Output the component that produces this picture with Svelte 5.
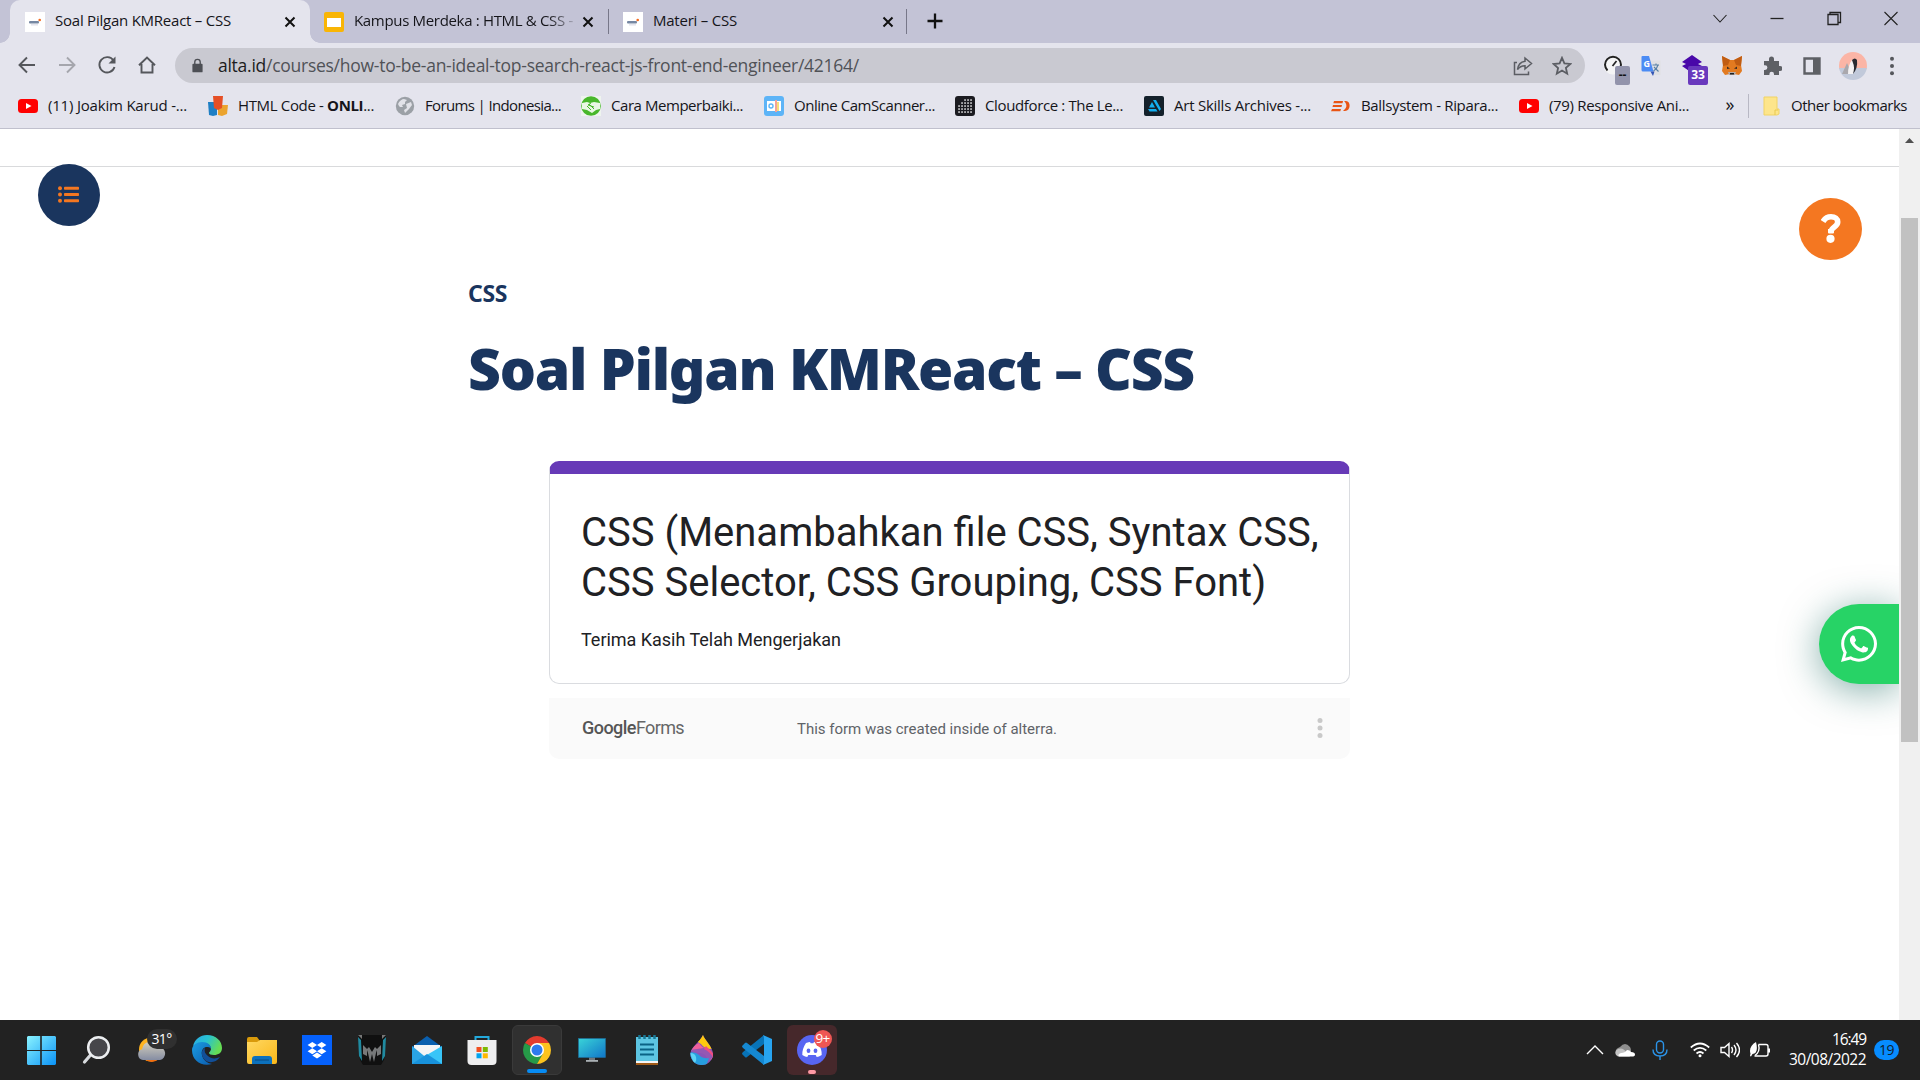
<script>
  const bookmarks = [
    { icon: 'youtube', label: '(11) Joakim Karud -...', text: 139, slot: 190 },
    { icon: 'html', label: 'HTML Code - ', bold: 'ONLI', tail: '...', text: 136, slot: 187 },
    { icon: 'globe', label: 'Forums | Indonesia...', text: 136, slot: 186 },
    { icon: 'hands', label: 'Cara Memperbaiki...', text: 132, slot: 183 },
    { icon: 'camera', label: 'Online CamScanner...', text: 141, slot: 191 },
    { icon: 'dots', label: 'Cloudforce : The Le...', text: 138, slot: 189 },
    { icon: 'art', label: 'Art Skills Archives -...', text: 137, slot: 187 },
    { icon: 'ball', label: 'Ballsystem - Ripara...', text: 137, slot: 188 },
    { icon: 'youtube', label: '(79) Responsive Ani...', text: 140, slot: 196 }
  ];

  const apps = [
    'start', 'search', 'weather', 'edge', 'folder', 'dropbox', 'predator', 'mail',
    'store', 'chrome', 'monitor', 'notepad', 'paint', 'vscode', 'discord'
  ];

  // Tracks a label in or out so that it spans the given width.
  function fit(node, width) {
    const range = document.createRange();
    range.selectNodeContents(node);
    const natural = range.getBoundingClientRect().width;
    node.style.letterSpacing = `${(width - natural) / node.textContent.length}px`;
  }
</script>

{#snippet favicon()}
  <svg class="i20" viewBox="0 0 20 20"><rect width="20" height="20" fill="#fff" /><rect x="4" y="9" width="10" height="2.400" rx="1" fill="#7687a2" /><rect x="6" y="12.500" width="7" height=".8" fill="#ccd" /><circle cx="14.700" cy="8" r="1.300" fill="#f36b21" /></svg>
{/snippet}

{#snippet closeX()}
  <svg class="i20" viewBox="0 0 20 20"><path d="M5.500 5.500l9 9M14.500 5.500l-9 9" stroke="#111" stroke-width="2" /></svg>
{/snippet}

{#snippet bookmarkIcon(name)}
  <svg class="i20" viewBox="0 0 20 20">
    {#if name === 'youtube'}
      <rect y="3" width="20" height="14" rx="3.500" fill="#f00" /><path d="M8 7l5.500 3L8 13z" fill="#fff" />
    {:else if name === 'html'}
      <path d="M0 6h9v13l-4 1-4-1z" fill="#1f7fc4" /><path d="M10 9h10l-1 9-5 2-4-1z" fill="#eba32e" /><path d="M5 0h10l-1 12-4 2-4-2z" fill="#e54f26" />
    {:else if name === 'globe'}
      <circle cx="10" cy="10" r="9.200" fill="#9ba0a6" /><path d="M3 8c1-3 4-5 6-5l3 1-2 2v2l-3 1 1 2H5l-1-1zM11 8l5-2 1 3-3 4-4 4-1-3 3-2z" fill="#e1e2e8" />
    {:else if name === 'hands'}
      <rect width="20" height="20" fill="#eef4ee" /><circle cx="10" cy="10" r="9.800" fill="#48b72b" /><path d="M1 7l5-1 3 1 4-1 6 1v6l-4 1-4 3-5-3-5-1z" fill="#e9f7e4" /><path d="M6 10l4 4M8 8l5 5M10 7l-3 2 6 2" stroke="#48b72b" fill="none" />
    {:else if name === 'camera'}
      <rect width="20" height="20" rx="3" fill="#5db4f7" /><path d="M3 5h14v10H3z" fill="#fff" /><circle cx="7" cy="10" r="2.700" fill="#5db4f7" /><circle cx="7" cy="10" r="1.300" fill="#fff" /><path d="M11 4h2v12h-2z" fill="#f4a29a" /><path d="M13 6h2v9h-2z" fill="#f7df78" />
    {:else if name === 'dots'}
      <rect width="20" height="20" rx="3" fill="#1b1b20" />
      {#each [4, 7, 10, 13, 16] as y, r}{#each [4, 7, 10, 13, 16] as x, c}{#if r + c > 1}<rect x={x - 0.7} y={y - 0.7} width="1.500" height="1.500" fill="#f4f4f4" />{/if}{/each}{/each}
    {:else if name === 'art'}
      <rect width="20" height="20" rx="2" fill="#14212b" /><path d="M4 13h8l1.500 2.500H5.500zM9 4h3l5 9-1.500 2zM8 6l3 5.500H5z" fill="#13aff0" />
    {:else if name === 'ball'}
      <path d="M3 5h9l-.5 2.200H2.300zM2 9h9l-.5 2H1.500zM1 13h9l-.7 2.200H0zM13 5h2c5 0 5 10-1 10h-2l2-2c2-2 2-5-1-8z" fill="#e95414" />
    {/if}
  </svg>
{/snippet}

{#snippet appIcon(name)}
  <svg class="i30" viewBox="0 0 30 30">
    {#if name === 'start'}
      <linearGradient id="win" x1="0" y1="0" x2="1" y2="1"><stop stop-color="#8af3ff" /><stop offset="1" stop-color="#0a92f6" /></linearGradient>
      <path d="M1 1h12.500v14H0V2zM14.500 1h13.500l1 1v13H14.500zM0 16h13.500v14H1l-1-1zM14.500 16H29v13l-1 1H14.500z" fill="url(#win)" /><path d="M14 0v30M0 15.500h30" stroke="#222" stroke-width="1.200" />
    {:else if name === 'search'}
      <path d="M9 19.500L2.500 27" stroke="#d8dbde" stroke-width="3.200" stroke-linecap="round" /><circle cx="16.500" cy="12.500" r="10.300" fill="#46464a" stroke="#eceef0" stroke-width="2.500" />
    {:else if name === 'weather'}
      <linearGradient id="cl" x1="0" y1="0" x2="0" y2="1"><stop stop-color="#d5d0bd" /><stop offset="1" stop-color="#858da3" /></linearGradient>
      <circle cx="14" cy="14.500" r="12" fill="#ffb31f" /><path d="M7 24q8 6 15 0z" fill="#f36f10" /><path d="M6 25a5.500 5.500 0 0 1-1-10.700 9 9 0 0 1 17-2.500A6.700 6.700 0 0 1 23 25z" fill="url(#cl)" />
    {:else if name === 'edge'}
      <linearGradient id="e1" x1="0" y1="0" x2="1" y2=".4"><stop stop-color="#2aa8e6" /><stop offset=".5" stop-color="#28c2d1" /><stop offset="1" stop-color="#65dd55" /></linearGradient>
      <linearGradient id="e2" x1="0" y1="0" x2="1" y2="1"><stop stop-color="#1b9de2" /><stop offset="1" stop-color="#0b5cb0" /></linearGradient>
      <path d="M1 11C3 4 8 0 15 0c9 0 15 6 15 13 0 5-4 7-8 7-3 0-5-1-5-2s2-2 2-4c0-3-3-6-8-6-5 0-8 2-10 3z" fill="url(#e1)" /><path d="M0 15C0 10 5 7 10 7c6 0 9 3 9 7-1-2-3-2-4-2-4 0-6 4-5 8 1 5 5 8 10 9C10 32 0 26 0 15z" fill="url(#e2)" /><path d="M13 13c-4 2-4 7-1 11 4 5 12 4 16-2-4 2-9 2-12-1-3-2-4-5-3-8z" fill="#124f98" />
    {:else if name === 'folder'}
      <linearGradient id="fo" x1="0" y1="0" x2="1" y2="1"><stop stop-color="#ffd862" /><stop offset="1" stop-color="#f9b719" /></linearGradient>
      <path d="M0 4q0-2 2-2h8l3 4h15v5H0z" fill="#d99a0b" /><path d="M0 7h10l3-2h17v22q0 2-2 2H2q-2 0-2-2z" fill="url(#fo)" /><path d="M5 29v-5q0-3 3-3h14q3 0 3 3v5z" fill="#0c71bd" /><path d="M8 25h14" stroke="#084b81" />
    {:else if name === 'dropbox'}
      <rect width="30" height="30" fill="#0561fc" /><path d="M10.300 7l4.700 3-4.700 3-4.700-3zM19.700 7l4.700 3-4.700 3-4.700-3zM10.300 13.200l4.700 3-4.700 3-4.700-3zM19.700 13.200l4.700 3-4.700 3-4.700-3zM15 17.400l4.700 3-4.700 3-4.700-3z" fill="#fff" />
    {:else if name === 'predator'}
      <path d="M1 0h28l-2 25-3 5H6l-3-5z" fill="#101010" /><path d="M1 2l3 3 1 21-3-5zM29 2l-3 3-1 21 3-5z" fill="#208aa0" /><path d="M6 10l4 4 2-2 3 5 3-5 2 2 4-4v9l-4 2v-6l-1 3-2 9-2-8-2 8-2-9-1-3v6l-4-2z" fill="#77797a" /><path d="M1 0h4v4zM29 0h-4v4z" fill="#777" />
    {:else if name === 'mail'}
      <path d="M0 12L15 1l15 11v17H0z" fill="#0a5fae" /><path d="M2 10h26v12H2z" fill="#f4f4f5" /><path d="M0 11l22 18H0z" fill="#2aa4e5" /><path d="M30 11L8 24l14 5h8z" fill="#38c5f8" /><path d="M0 29h30L15 19z" fill="#1892dc" />
    {:else if name === 'store'}
      <path d="M8.500 7V2h13v5" fill="none" stroke="#23a9dc" stroke-width="2" /><path d="M.5 5h29v21q0 4-4 4h-21q-4 0-4-4z" fill="#eeeeef" /><path d="M9.500 12h5v5h-5z" fill="#f14f21" /><path d="M15.800 12h5v5h-5z" fill="#7eb900" /><path d="M9.500 18.300h5v5h-5z" fill="#00a3ee" /><path d="M15.800 18.300h5v5h-5z" fill="#feb800" />
    {:else if name === 'chrome'}
      <path d="M15 15L2.900 8A14 14 0 0 1 27.100 8z" fill="#e33b2e" /><path d="M15 15L2.900 8A14 14 0 0 0 15 29l6-10z" fill="#269a48" /><path d="M15 8h12.100A14 14 0 0 1 15 29l6-10.500z" fill="#fcc31e" /><circle cx="15" cy="15" r="7" fill="#fff" /><circle cx="15" cy="15" r="5.500" fill="#2d7aed" />
    {:else if name === 'monitor'}
      <linearGradient id="mo" x1="0" y1="0" x2="1" y2="1"><stop stop-color="#39d4d8" /><stop offset="1" stop-color="#1175c8" /></linearGradient>
      <path d="M12 21h6v4h-6z" fill="#71777c" /><path d="M9 25h12v1.800H9z" fill="#aab0b4" /><rect x="1.500" y="3.500" width="27" height="19" fill="url(#mo)" stroke="#1b6e9e" stroke-width=".6" />
    {:else if name === 'notepad'}
      <path d="M4 26h22v4H4z" fill="#a05a17" /><path d="M4 25h22v3H4z" fill="#f5f5f5" /><path d="M4 2h22v24H4z" fill="#5dc5e2" /><path d="M8 9.500h14M8 14.500h14M8 19.500h14" stroke="#0a6285" stroke-width="1.800" /><path d="M7.500 0v4M12.500 0v4M17.500 0v4M22.500 0v4" stroke="#187895" stroke-width="2.500" />
    {:else if name === 'paint'}
      <clipPath id="drop"><path d="M16 0c1 4 10 12 10 19a11.300 11 0 0 1-22.600 0C3.400 12 13 7 16 0z" /></clipPath>
      <g clip-path="url(#drop)"><path d="M0 0h30v30H0z" fill="#8a55b7" /><path d="M0 0h30v12q-10 5-16-3z" fill="#ffc90e" /><path d="M4 16q3-6 8-8 3 5 8 6t8 10l-6 1q0-7-8-8-6-1-10-1z" fill="#f0609a" /><path d="M3 15q3 3 9 3 8 0 9 9l5-5q-1-8-9-9z" fill="#9458b3" /><path d="M19 11l8 8v6q-3-8-10-11z" fill="#ef4d83" /><path d="M0 18q8-2 12 2t10 3l-3 8H0z" fill="#269edf" /><path d="M3 18q5 0 6 4t-2 7z" fill="#5ed4f4" /></g>
    {:else if name === 'vscode'}
      <path d="M22 0v9L5 22q-1 1-2 0l-3-3q0-1 1-2z" fill="#0873b7" /><path d="M22 30v-9L5 8q-1-1-2 0L0 11q0 1 1 2z" fill="#1588d1" /><path d="M21 0l9 4v22l-9 4q1-1 1-3V3q0-2-1-3z" fill="#27a4f0" />
    {:else if name === 'discord'}
      <circle cx="15" cy="15" r="15" fill="#5865f2" /><path d="M9 8q3-1 4-1l.7 1.200h2.600L17 7q2 0 4 1 4 6 3.700 12-3 2-5 2l-1-2h-7.400l-1 2q-2 0-5-2Q5 14 9 8z" fill="#fff" /><ellipse cx="11.500" cy="15.800" rx="1.900" ry="2.200" fill="#5865f2" /><ellipse cx="18.500" cy="15.800" rx="1.900" ry="2.200" fill="#5865f2" />
    {/if}
  </svg>
{/snippet}

<div class="screen">
  <header class="tabs">
    <div class="tab active">
      {@render favicon()}
      <span class="label" use:fit={176}>Soal Pilgan KMReact – CSS</span>
      {@render closeX()}
    </div>
    <div class="tab second">
      <svg class="i20" viewBox="0 0 20 20"><rect width="20" height="20" rx="2" fill="#f9b505" /><path d="M3 6h14v9H3z" fill="#fff" /></svg>
      <span class="label fade" use:fit={219}>Kampus Merdeka : HTML &amp; CSS -</span>
      {@render closeX()}
    </div>
    <div class="tab third">
      {@render favicon()}
      <span class="label" use:fit={84}>Materi – CSS</span>
      {@render closeX()}
    </div>
    <svg class="plus" viewBox="0 0 20 20"><path d="M10 2.500v15M2.500 10h15" stroke="#111" stroke-width="2.300" /></svg>
    <div class="window">
      <svg viewBox="0 0 20 20"><path d="M3.500 7l6.500 7 6.500-7" /></svg>
      <svg viewBox="0 0 20 20"><path d="M3.500 10.500h13" stroke-width="1.300" /></svg>
      <svg viewBox="0 0 20 20"><path d="M4 6.500h10v10H4zM6 6.500v-2h10.500v10H14" stroke-width="1.300" /></svg>
      <svg viewBox="0 0 20 20"><path d="M3.500 4l13 13M16.500 4l-13 13" /></svg>
    </div>
  </header>

  <nav class="toolbar">
    <div class="navs">
      <svg viewBox="0 0 20 20"><path d="M18 10H3M10 2.500L2.500 10l7.500 7.500" /></svg>
      <svg viewBox="0 0 20 20" class="dim"><path d="M2 10h15M10 2.500l7.500 7.500-7.500 7.500" /></svg>
      <svg viewBox="0 0 20 20"><path d="M16.500 5.500A7.700 7.700 0 1 0 17.500 12" /><path d="M18.500 1.500v7h-7z" fill="#55575c" stroke="none" /></svg>
      <svg viewBox="0 0 20 20"><path d="M2 10.200L10 2.500l8 7.700M4.500 9v8.500h11V9" /></svg>
    </div>
    <div class="omnibox">
      <svg class="lock" viewBox="0 0 20 20"><path d="M5 8h10q1 0 1 1v8q0 1-1 1H5q-1 0-1-1V9q0-1 1-1z" fill="#4d4f55" /><path d="M6.800 9V6a3.200 3.200 0 0 1 6.400 0v3" fill="none" stroke="#4d4f55" stroke-width="1.600" /></svg>
      <span class="url" use:fit={641}><b>alta.id</b>/courses/how-to-be-an-ideal-top-search-react-js-front-end-engineer/42164/</span>
      <svg class="act" viewBox="0 0 20 20"><path d="M4 6.500H1.500v12h14v-3M12 2l6.500 5.500L12 13V9.700c-4 0-6 1.600-7.500 4C5 9 7.500 6 12 5.300z" /></svg>
      <svg class="act" viewBox="0 0 20 20"><path d="M10 1.800l2.400 5.500 6 .6-4.500 4 1.300 5.800L10 14.600l-5.200 3.100L6.100 12l-4.500-4 6-.6z" stroke-width="1.800" /></svg>
    </div>
    <div class="ext e1">
      <svg viewBox="0 0 24 24"><circle cx="10" cy="10" r="9.500" fill="#f5f5f6" /><path d="M4.500 15.500a8 8 0 1 1 11 0" fill="none" stroke="#222" stroke-width="2" /><path d="M9.500 11l4-5" stroke="#222" stroke-width="1.700" /></svg>
      <span class="badge grey">--</span>
    </div>
    <svg class="ext e2" viewBox="0 0 20 20"><path d="M9 4.500h10.500V19H11z" fill="#dfe0e3" /><path d="M11.500 9h6.500M15 7.500V9M17 9q-1 4-4.500 6M13 11l4.500 4.500" stroke="#5981a5" fill="none" stroke-width="1.100" /><path d="M1.500 0H8l4.500 15.500H2q-1.500 0-1.500-1.500V1q0-1 1-1z" fill="#4b8bf4" /><path d="M9.500 15.500h4L12 20z" fill="#3355b5" /><text x="2.500" y="10.500" class="g">G</text></svg>
    <div class="ext e3">
      <svg viewBox="0 0 24 24"><path d="M12 0l10 7-4 2 4 2-10 7-10-7 4-2-4-2z" fill="#4908a9" /></svg>
      <span class="badge purple">33</span>
    </div>
    <svg class="ext e4" viewBox="0 0 20 20"><path d="M0 0l8 4h4l8-4-1 9 1 6-3 4-5-1h-4l-5 1-3-4 1-6z" fill="#e27a20" /><path d="M0 0l8 4-2 5-5 1zM20 0l-8 4 2 5 5 1z" fill="#c05c12" /><path d="M5 10.500l3 2-3 .5zM15 10.500l-3 2 3 .5z" fill="#3a2b25" /><path d="M6 16h8l-1 3H7z" fill="#b7aaa3" /><path d="M8 17h4v1.500H8z" fill="#222" /></svg>
    <svg class="ext e5" viewBox="0 0 20 20"><path d="M2 5h5V3a2.500 2.500 0 0 1 5 0v2h5v5h1a2.500 2.500 0 0 1 0 5h-1v4h-5v-1a2.300 2.300 0 0 0-4.600 0v1H2v-5h1a2.400 2.400 0 0 0 0-4.800H2z" fill="#5e6065" /></svg>
    <svg class="ext e6" viewBox="0 0 20 20"><path d="M2.500 2.500h15v15h-15z" fill="none" stroke="#5e6065" stroke-width="2.400" /><path d="M11 2h6v16h-6z" fill="#5e6065" /></svg>
    <svg class="ext e7" viewBox="0 0 28 28"><clipPath id="face"><circle cx="14" cy="14" r="14" /></clipPath><g clip-path="url(#face)"><path d="M0 0h28v17H0z" fill="#fbb5a6" /><path d="M0 16h28v12H0z" fill="#c1c9da" /><path d="M3 22L8 11l5 11z" fill="#aaa8ad" /><path d="M13 8q4-1 4 3l-3 11H9q0-9 4-14z" fill="#f4f2f3" /><path d="M13 8q3-3 5 0 1 8-4 14 2-7 0-11z" fill="#292a31" /></g></svg>
    <svg class="ext e8" viewBox="0 0 20 20" fill="#55575c"><circle cx="10" cy="2.800" r="2" /><circle cx="10" cy="10" r="2" /><circle cx="10" cy="17.200" r="2" /></svg>
  </nav>

  <nav class="bookmarks">
    {#each bookmarks as b}
      <div class="bookmark" style:width="{b.slot}px">
        {@render bookmarkIcon(b.icon)}
        <span use:fit={b.text}>{b.label}{#if b.bold}<b>{b.bold}</b>{b.tail}{/if}</span>
      </div>
    {/each}
    <span class="more">»</span>
    <div class="other">
      <svg class="i20" viewBox="0 0 20 20"><path d="M3 1h13v12h2v5l-2 1H3z" fill="#fde58b" stroke="#f1d365" /><path d="M14 19v-5h3" fill="none" stroke="#e9c94f" /></svg>
      <span use:fit={116}>Other bookmarks</span>
    </div>
  </nav>

  <div class="viewport">
    <main>
      <div class="strip"></div>
      <article>
        <h4 use:fit={39}>CSS</h4>
        <h1 use:fit={726}>Soal Pilgan KMReact <span>–</span> CSS</h1>
        <section class="form">
          <h2>CSS (Menambahkan file CSS, Syntax CSS, CSS Selector, CSS Grouping, CSS Font)</h2>
          <p><span use:fit={260}>Terima Kasih Telah Mengerjakan</span></p>
        </section>
        <footer>
          <span class="brand"><b use:fit={54}>Google</b><span use:fit={48}>Forms</span></span>
          <span class="note" use:fit={260}>This form was created inside of alterra.</span>
          <svg class="kebab" viewBox="0 0 8 24" fill="#c9c9c9"><circle cx="4" cy="4.500" r="2.500" /><circle cx="4" cy="12" r="2.500" /><circle cx="4" cy="19.500" r="2.500" /></svg>
        </footer>
      </article>

      <button class="list" aria-label="Daftar materi">
        <svg viewBox="0 0 21 17"><g fill="#f47721"><circle cx="2" cy="2.200" r="2" /><circle cx="2" cy="8.500" r="2" /><circle cx="2" cy="14.800" r="2" /><rect x="6" y=".7" width="15" height="3" rx=".8" /><rect x="6" y="7" width="15" height="3" rx=".8" /><rect x="6" y="13.300" width="15" height="3" rx=".8" /></g></svg>
      </button>
      <button class="help" aria-label="Bantuan">
        <svg viewBox="0 0 20 29"><path d="M2 7.500Q5 2.800 10 2.800c4 0 6.700 2.200 6.700 5.200 0 4.800-6 4.800-6.500 9" fill="none" stroke="#fff" stroke-width="5.600" /><path d="M7 15h6v3.500q0 1-1 1H8q-1 0-1-1z" fill="#fff" /><circle cx="9.500" cy="24.800" r="4.100" fill="#fff" /></svg>
      </button>
      <button class="whatsapp" aria-label="WhatsApp">
        <svg viewBox="0 0 448 448"><path fill="#fff" d="M380.900 65.100C339 23.100 283.200 0 223.900 0 101.500 0 1.900 99.600 1.900 222c0 39.100 10.200 77.300 29.600 111L0 448l117.700-30.900c32.400 17.700 68.900 27 106.100 27h.1c122.300 0 224.100-99.600 224.100-222 0-59.300-25.200-115-67.100-157zm-157 341.600c-33.200 0-65.700-8.900-94-25.700l-6.700-4-69.800 18.300L72 327.200l-4.400-7c-18.500-29.400-28.200-63.300-28.200-98.200 0-101.700 82.800-184.500 184.600-184.500 49.300 0 95.600 19.200 130.400 54.100 34.800 34.900 56.200 81.200 56.100 130.500 0 101.800-84.900 184.600-186.600 184.600zm101.200-138.200c-5.500-2.800-32.800-16.200-37.900-18-5.100-1.900-8.800-2.800-12.500 2.800-3.700 5.600-14.300 18-17.600 21.800-3.200 3.700-6.500 4.200-12 1.400-32.600-16.300-54-29.100-75.500-66-5.700-9.800 5.700-9.100 16.300-30.300 1.800-3.700.9-6.900-.5-9.700-1.400-2.800-12.500-30.100-17.100-41.200-4.500-10.800-9.100-9.300-12.500-9.500-3.200-.2-6.900-.2-10.600-.2-3.700 0-9.700 1.400-14.800 6.900-5.100 5.600-19.400 19-19.400 46.300 0 27.300 19.900 53.700 22.600 57.400 2.800 3.700 39.100 59.700 94.800 83.800 35.200 15.200 49 16.500 66.600 13.900 10.700-1.600 32.800-13.400 37.400-26.400 4.600-13 4.600-24.100 3.200-26.400-1.300-2.500-5-3.900-10.500-6.600z" /></svg>
      </button>
    </main>
    <aside class="scroll">
      <svg viewBox="0 0 9 5"><path d="M4.500 0L9 5H0z" fill="#505050" /></svg>
      <div class="thumb"></div>
    </aside>
  </div>

  <div class="taskbar">
    <div class="apps">
      {#each apps as app}
        <div class="slot">
          <div class={['tile', app]}>
            {@render appIcon(app)}
            {#if app === 'weather'}<span class="temp">31°</span>{/if}
            {#if app === 'discord'}<span class="count">9+</span>{/if}
          </div>
        </div>
      {/each}
    </div>
    <div class="tray">
      <svg class="t1" viewBox="0 0 20 20"><path d="M2 14l8-8 8 8" /></svg>
      <svg class="t2" viewBox="0 0 20 20"><path d="M1 15q-2-6 4-8 5-6 10 0 2 3 0 9z" fill="#8e8e8e" stroke="none" /><path d="M3 16.500a4 4 0 0 1 0-7.500q5-2 8 3l4 4.500z" fill="#c3c3c3" stroke="none" /><path d="M4 16.500q-2-2 2-3.500 4 0 6-3 3 0 4 2 4 0 4 2.500 0 2-3 2z" fill="#fff" stroke="none" /></svg>
      <svg class="t3" viewBox="0 0 20 20"><g stroke="#2b93e8"><rect x="6.500" y="1" width="7" height="12" rx="3.500" /><path d="M3 9.500q0 6.500 7 6.500t7-6.500M10 16v4" /></g></svg>
      <svg class="t4" viewBox="0 0 20 20"><path d="M.8 7.500q9.200-8 18.400 0M3.700 10.500q6.300-5.300 12.600 0M6.500 13.500q3.500-3 7 0" stroke-width="1.700" /><circle cx="10" cy="15.700" r="1.500" fill="#fff" stroke="none" /></svg>
      <svg class="t4" viewBox="0 0 20 20"><path d="M1 7.500h3.500L9 3.500v13l-4.500-4H1zM11.500 7q2 3 0 6M14 5q4 5 0 10M16.500 3q6 7 0 14" /></svg>
      <svg class="t5" viewBox="0 0 20 20"><path d="M8.500 4.500H16q2 0 2 2v7.500q0 2-2 2H4.500" /><path d="M18 8.500h2v4h-2z" fill="#fff" stroke="none" /><path d="M6 2C1 5-1 9 .5 13.500L0 16l1 .5L2.500 14c4 0 5.500-4 3.500-12z" fill="#fff" stroke="none" /><path d="M8.500 4.500q2 7-3.500 11" /></svg>
      <div class="clock"><span use:fit={34}>16:49</span><span use:fit={77}>30/08/2022</span></div>
      <span class="nine">19</span>
    </div>
  </div>
</div>

<style>
  :global(body) { margin: 0; overflow: hidden; background: #fff; }
  .screen { width: 1920px; height: 1080px; display: flex; flex-direction: column; overflow: hidden; font-family: "Open Sans", "Noto Sans", sans-serif; font-size: 15px; color: #15151a; }
  .screen * { box-sizing: border-box; }
  svg { display: block; flex: none; }
  .i20 { width: 20px; height: 20px; }
  .i30 { width: 30px; height: 30px; }

  .tabs { height: 43px; flex: none; display: flex; background: #c3c3d6; padding-left: 10px; align-items: flex-start; }
  .tab { height: 43px; display: flex; align-items: center; position: relative; flex: none; }
  .tab .label { flex: 1; margin-left: 10px; padding-bottom: 3px; white-space: nowrap; line-height: 20px; }
  .tab.active { width: 300px; background: #e4e4ed; border-radius: 10px 10px 0 0; padding: 0 10px 0 15px; }
  .tab.active::before, .tab.active::after { content: ''; position: absolute; bottom: 0; width: 10px; height: 10px; }
  .tab.active::before { left: -10px; background: radial-gradient(circle at 0 0, transparent 9.500px, #e4e4ed 10px); }
  .tab.active::after { right: -10px; background: radial-gradient(circle at 100% 0, transparent 9.500px, #e4e4ed 10px); }
  .tab.second { width: 299px; padding: 0 11px 0 14px; }
  .tab.third { width: 298px; padding: 0 9px 0 14px; }
  .tab.second::after, .tab.third::after { content: ''; position: absolute; right: 0; top: 9px; width: 1px; height: 25px; background: #777789; }
  .tab .fade { margin-right: 3px; mask-image: linear-gradient(90deg, #000 88%, rgba(0, 0, 0, .15) 100%); }
  .plus { width: 20px; height: 20px; margin: 11px 0 0 18px; }
  .window { margin: 8px 19px 0 auto; display: flex; gap: 37px; }
  .window svg { width: 20px; height: 20px; fill: none; stroke: #222; stroke-width: 1.100; }

  .toolbar { height: 45px; flex: none; display: flex; align-items: center; background: #e4e4ed; }
  .navs { width: 175px; padding: 0 0 1px 17px; display: flex; gap: 20px; }
  .navs svg { width: 20px; height: 20px; fill: none; stroke: #55575c; stroke-width: 1.900; }
  .navs .dim { stroke: #a5a6ad; }
  .omnibox { width: 1410px; height: 35px; border-radius: 18px; background: #c9c9d1; display: flex; align-items: center; padding: 0 13px 0 14px; }
  .lock { width: 17px; height: 17px; margin-right: 12px; }
  .url { flex: 1; padding-bottom: 2px; font-size: 17.500px; line-height: 28px; color: #505257; white-space: nowrap; }
  .url b { font-weight: 400; color: #1c1c20; }
  .act { width: 20px; height: 20px; margin-left: 19px; fill: none; stroke: #5b5d63; stroke-width: 1.500; }
  .ext { width: 20px; height: 20px; position: relative; flex: none; }
  .e1, .e3 { width: 26px; height: 26px; }
  .e1 svg, .e3 svg { width: 24px; height: 24px; }
  .e1 { margin-left: 18px; margin-top: 5px; }
  .e2 { margin-left: 12px; }
  .e3 { margin: 5px 0 0 19px; }
  .e4 { margin-left: 16px; }
  .e5 { margin-left: 20px; }
  .e6 { margin-left: 20px; }
  .e7 { width: 28px; height: 28px; margin-left: 17px; }
  .e8 { margin-left: 15px; }
  .g { font: 700 9px "Open Sans", sans-serif; fill: #fff; }
  .badge { position: absolute; color: #fff; font-size: 12px; line-height: 18px; font-weight: 700; text-align: center; border-radius: 2px; height: 19px; }
  .badge.grey { left: 12px; top: 11px; width: 15px; background: #9293ab; color: #111; }
  .badge.purple { left: 8px; top: 11px; width: 20px; background: #6939bd; }

  .bookmarks { height: 41px; flex: none; display: flex; align-items: center; background: #e4e4ed; border-bottom: 1px solid #c0c0cd; padding: 0 0 4px 18px; white-space: nowrap; }
  .bookmark, .other { display: flex; align-items: center; gap: 10px; flex: none; }
  .bookmark span, .other span { padding-bottom: 2px; }
  .bookmark b { font-weight: 700; }
  .more { width: 30px; padding-bottom: 4px; font-size: 18px; line-height: 20px; text-align: center; }
  .other { border-left: 1px solid #b8b8c4; height: 24px; margin-left: 3px; padding-left: 12px; }

  .viewport { flex: 1; display: flex; min-height: 0; }
  main { width: 1899px; position: relative; overflow: hidden; background: #fff; }
  .strip { height: 38px; border-bottom: 1px solid #d9dadc; }
  article { width: 962px; margin-left: 468px; padding-top: 110px; }
  h1, h2, h4, p { margin: 0; }
  h4 { font: 700 23px/32px "Noto Sans", sans-serif; color: #1a355e; }
  h1 { margin-top: 20px; font: 900 57px/78px "Noto Sans", sans-serif; color: #1a355e; white-space: nowrap; }
  .form { width: 801px; height: 223px; margin: 54px 0 0 81px; border: 1px solid #dadce0; border-top: 13px solid #673ab7; border-radius: 10px; padding: 34px 28px 0 31px; font-family: Roboto, sans-serif; color: #202124; }
  .form h2 { font-weight: 400; font-size: 40px; line-height: 50px; white-space: normal; }
  .form p { margin-top: 19px; font-size: 18px; line-height: 26px; }
  footer { width: 801px; height: 61px; margin: 14px 0 0 81px; background: #fafafa; border-radius: 0 0 10px 10px; display: flex; align-items: center; padding: 0 0 2px 33px; font-family: Roboto, sans-serif; color: #5f6368; }
  .brand { width: 215px; font-size: 18px; line-height: 22px; color: #666; display: flex; }
  .brand b { font-weight: 500; color: #555; }
  .note { width: 519px; padding-top: 2px; font-size: 15px; }
  .kebab { width: 8px; height: 24px; }
  button { position: absolute; border: 0; padding: 0; display: flex; align-items: center; justify-content: center; border-radius: 50%; }
  .list { left: 38px; top: 35px; width: 62px; height: 62px; padding: 0 1px 1px 0; background: #1a355e; }
  .list svg { width: 21px; height: 17px; }
  .help { left: 1799px; top: 69px; width: 63px; height: 62px; padding-bottom: 1px; background: #f47721; }
  .help svg { width: 20px; height: 29px; }
  .whatsapp { right: 0; top: 475px; width: 80px; height: 80px; border-radius: 40px 0 0 40px; background: #27d366; box-shadow: 0 6px 38px rgba(7, 94, 84, .5); }
  .whatsapp svg { width: 36px; height: 36px; }
  .scroll { width: 21px; background: #f0f0f0; padding: 9px 2px 0; }
  .scroll svg { width: 9px; height: 5px; margin: 0 auto; }
  .thumb { height: 524px; margin-top: 75px; background: #c1c1c1; }

  .taskbar { height: 60px; flex: none; background: #222; display: flex; justify-content: space-between; color: #fff; }
  .apps { display: flex; padding-left: 14px; }
  .slot { width: 55px; display: flex; align-items: center; justify-content: center; }
  .tile { width: 50px; height: 50px; border-radius: 6px; display: flex; align-items: center; justify-content: center; position: relative; }
  .tile.chrome { background: #303030; border: 1px solid #3a3a3a; }
  .tile.discord { background: #46282b; }
  .tile.chrome::after, .tile.discord::after { content: ''; position: absolute; bottom: 1px; height: 4px; border-radius: 2px; }
  .tile.chrome::after { width: 20px; background: #078cf4; }
  .tile.discord::after { width: 8px; background: #ff99a4; }
  .temp { position: absolute; left: 20px; top: 4px; width: 30px; height: 20px; border-radius: 10px; background: #303030; font-size: 14px; line-height: 19px; text-align: center; letter-spacing: -.7px; }
  .count { position: absolute; left: 27px; top: 5px; width: 18px; height: 18px; border-radius: 9px; background: #ef5654; font-size: 13.500px; line-height: 16px; text-align: center; letter-spacing: -.7px; }
  .tray { display: flex; align-items: center; padding-right: 21px; }
  .tray svg { width: 20px; height: 20px; fill: none; stroke: #fff; stroke-width: 1.400; }
  .tray .t2 { margin-left: 10px; }
  .tray .t3 { margin: 0 20px 0 15px; }
  .tray .t4 { margin-right: 10px; }
  .clock { width: 96px; padding-bottom: 2px; display: flex; flex-direction: column; align-items: flex-end; line-height: 20px; font-size: 15.500px; }
  .nine { width: 25px; height: 20px; margin-left: 8px; border-radius: 10px; background: #078cff; color: #10202c; font-size: 14px; line-height: 20px; text-align: center; letter-spacing: -.5px; }
</style>
